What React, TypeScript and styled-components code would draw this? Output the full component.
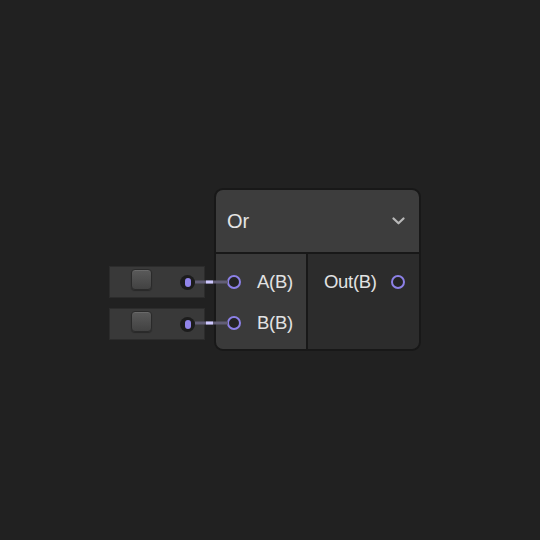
import React from 'react';
import styled, { createGlobalStyle } from 'styled-components';

const GlobalStyle = createGlobalStyle`
  html, body {
    margin: 0;
    padding: 0;
    background: #212121;
  }
  body {
    font-family: "Liberation Sans", Arial, sans-serif;
  }
`;

type Point = { x: number, y: number };

type InputData = Point & { id: string };

type PortData = { id: string, label: string };

const inputs: InputData[] = [
  { id: 'a', x: 109, y: 266 },
  { id: 'b', x: 109, y: 308 },
];

const nodeInputs: PortData[] = [
  { id: 'a', label: 'A(B)' },
  { id: 'b', label: 'B(B)' },
];

const nodeOutputs: PortData[] = [
  { id: 'out', label: 'Out(B)' },
];

// wires go from the little dot of each input widget into the node port
const wires = [
  { id: 'a', y: 282 },
  { id: 'b', y: 323 },
];

const ChevronDown: React.FC = () => (
  <svg width="13" height="8" viewBox="0 0 13 8">
    <path d="M1.5 1.5 L6.5 6.3 L11.5 1.5" fill="none" stroke="#b8b8b8" strokeWidth="2.2" strokeLinecap="round" strokeLinejoin="round" />
  </svg>
);

const BoolInput: React.FC<{ data: InputData }> = ({ data }) => (
  <Widget x={data.x} y={data.y}>
    <Checkbox />
    <OutDot>
      <OutDotCore />
    </OutDot>
  </Widget>
);

const Wire: React.FC<{ y: number }> = ({ y }) => (
  <WireSvg width="33" height="4" viewBox="0 0 33 4" style={{ top: y - 2 }}>
    <line x1="0" y1="2" x2="33" y2="2" stroke="#625e76" strokeWidth="3" />
    <line x1="11" y1="2" x2="18" y2="2" stroke="#cfc8ff" strokeWidth="3" />
  </WireSvg>
);

const App: React.FC = () => {
  return (
    <>
      <GlobalStyle />
      <Canvas>
        {inputs.map((input) => <BoolInput key={input.id} data={input} />)}

        <Node x={214} y={188}>
          <Header>
            <Title>Or</Title>
            <ChevronDown />
          </Header>
          <Body>
            <Column side="left">
              {nodeInputs.map((port) => (
                <PortRow key={port.id} side="left">
                  <Port />
                  <PortLabel>{port.label}</PortLabel>
                </PortRow>
              ))}
            </Column>
            <Column side="right">
              {nodeOutputs.map((port) => (
                <PortRow key={port.id} side="right">
                  <PortLabel>{port.label}</PortLabel>
                  <Port />
                </PortRow>
              ))}
            </Column>
          </Body>
        </Node>

        {wires.map((wire) => <Wire key={wire.id} y={wire.y} />)}
      </Canvas>
    </>
  );
}

const Canvas = styled.div`
  position: relative;
  width: 540px;
  height: 540px;
  overflow: hidden;
  background: #212121;
`;

const Widget = styled.div<Point>`
  position: absolute;
  left: ${({ x }) => x}px;
  top: ${({ y }) => y}px;
  width: 96px;
  height: 32px;
  box-sizing: border-box;
  display: flex;
  align-items: center;
  background: #393939;
  border: 1px solid #2c2c2c;
`;

const Checkbox = styled.div`
  width: 21px;
  height: 21px;
  box-sizing: border-box;
  margin-left: 21px;
  margin-bottom: 6px;
  border-radius: 4px;
  border: 1px solid #2a2a2a;
  background-image: linear-gradient(to bottom, #5a5a5a, #424242);
  box-shadow: inset 0 1px 0 rgb(255 255 255 / 10%), 0 1px 1px rgb(0 0 0 / 30%);
`;

const OutDot = styled.div`
  width: 15px;
  height: 15px;
  margin-left: 28px;
  border-radius: 50%;
  background: #1c1c1c;
  display: flex;
  align-items: center;
  justify-content: center;
`;

const OutDotCore = styled.div`
  width: 6px;
  height: 9px;
  border-radius: 3px;
  background: #9184ea;
`;

const WireSvg = styled.svg`
  position: absolute;
  left: 195px;
  display: block;
`;

const Node = styled.div<Point>`
  position: absolute;
  left: ${({ x }) => x}px;
  top: ${({ y }) => y}px;
  width: 207px;
  height: 163px;
  box-sizing: border-box;
  display: flex;
  flex-direction: column;
  gap: 2px;
  overflow: hidden;
  background: #181818;
  border: 2px solid #181818;
  border-radius: 9px;
`;

const Header = styled.div`
  height: 62px;
  display: flex;
  align-items: center;
  justify-content: space-between;
  padding: 0 14px 0 11px;
  background: #3d3d3d;
`;

const Title = styled.span`
  color: #e4e4e4;
  font-size: 20px;
  letter-spacing: -0.1px;
`;

const Body = styled.div`
  flex: 1;
  display: grid;
  grid-template-columns: 90px 111px;
  gap: 2px;
`;

const Column = styled.div<{ side: 'left' | 'right' }>`
  display: flex;
  flex-direction: column;
  padding-top: 7px;
  background: ${({ side }) => side === 'left' ? '#3a3a3a' : '#2c2c2c'};
`;

const PortRow = styled.div<{ side: 'left' | 'right' }>`
  height: 41px;
  display: flex;
  align-items: center;
  justify-content: ${({ side }) => side === 'left' ? 'flex-start' : 'space-between'};
  gap: ${({ side }) => side === 'left' ? '16px' : '14px'};
  padding: ${({ side }) => side === 'left' ? '0 0 0 11px' : '0 14px 0 16px'};
`;

const Port = styled.div`
  width: 14px;
  height: 14px;
  flex-shrink: 0;
  box-sizing: border-box;
  border-radius: 50%;
  border: 2px solid #8c80e6;
  background: #242424;
`;

const PortLabel = styled.span`
  color: #e2e2e2;
  font-size: 18.5px;
  letter-spacing: -0.3px;
`;

export default App;
